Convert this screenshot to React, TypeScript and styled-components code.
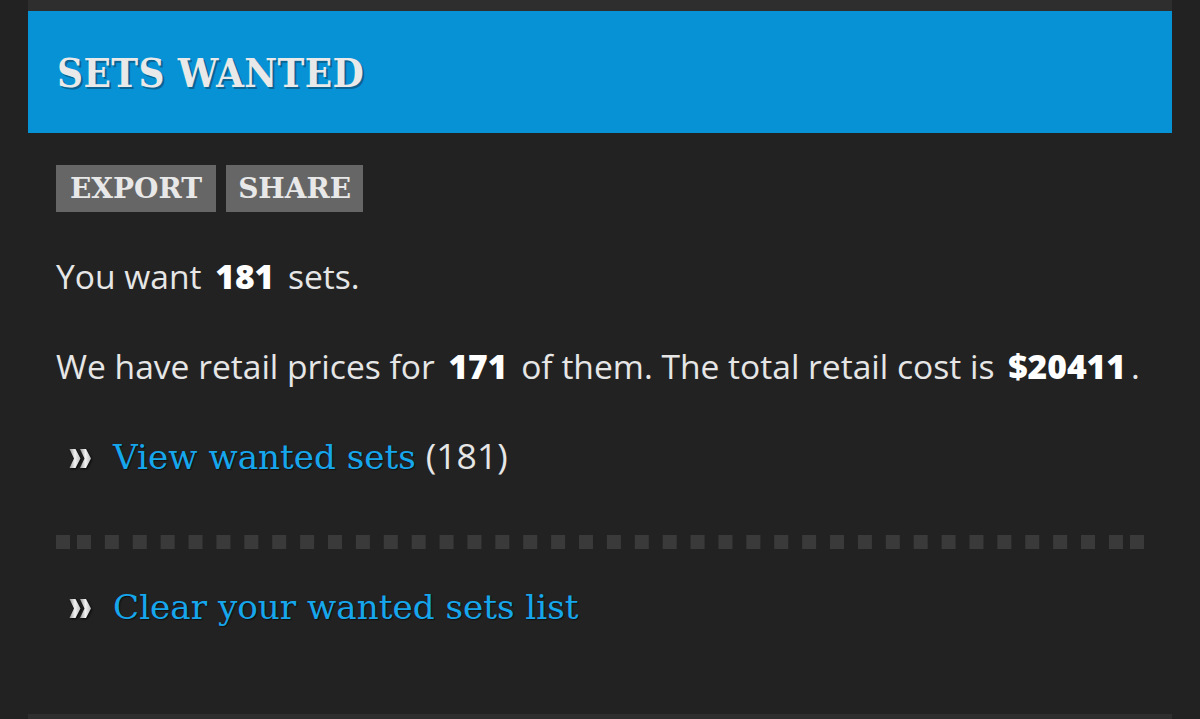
import React from "react";
import styled, { createGlobalStyle } from "styled-components";

const Global = createGlobalStyle`
  html, body { margin: 0; padding: 0; background: #222222; }
  body { font-family: "Open Sans", "Liberation Sans", sans-serif; }
`;

const Page = styled.div`
  width: 1200px;
  height: 719px;
  overflow: hidden;
  padding: 0 28px;
  box-sizing: border-box;
  display: flex;
  flex-direction: column;
`;

const Strip = styled.div<{ $h: number }>`
  height: ${(p) => p.$h}px;
  background: #2e2e2e;
  flex-shrink: 0;
`;

const Panel = styled.section`
  background: #222222;
  flex: 1;
  display: flex;
  flex-direction: column;
`;

const Header = styled.header`
  background: #0792d6;
  height: 122px;
  display: flex;
  align-items: center;
  padding: 0 29px;
`;

const Title = styled.h1`
  margin: 0;
  font-family: "DejaVu Serif Condensed", "DejaVu Serif", serif;
  font-stretch: condensed;
  font-weight: bold;
  font-size: 40px;
  color: #e9e9e9;
  letter-spacing: 0.4px;
  text-shadow: 2px 2px 0 #0a6494;
`;

const Body = styled.div`
  padding: 32px 28px 0;
  display: flex;
  flex-direction: column;
`;

const ButtonRow = styled.div`
  display: flex;
  gap: 10px;
`;

const Button = styled.button<{ $pad: number }>`
  background: #666666;
  border: none;
  height: 47px;
  padding: 0 ${(p) => p.$pad}px;
  font-family: "DejaVu Serif", "Liberation Serif", serif;
  font-weight: bold;
  font-size: 28px;
  color: #e8e8e8;
  cursor: pointer;
`;

const Para = styled.p<{ $top: number }>`
  margin: ${(p) => p.$top}px 0 0;
  font-size: 33.6px;
  line-height: 44px;
  color: #e6e6e6;
`;

const Num = styled.strong`
  font-weight: 800;
  color: #ffffff;
  padding: 0 5px;
`;

const LinkRow = styled.div<{ $top: number }>`
  margin-top: ${(p) => p.$top}px;
  display: flex;
  align-items: baseline;
  padding-left: 13px;
`;

const ChevronBox = styled.span`
  width: 44px;
  flex-shrink: 0;
  svg {
    display: block;
    filter: drop-shadow(1px 1px 1px rgba(0, 0, 0, 0.8));
  }
`;

const LinkText = styled.a`
  font-family: "DejaVu Serif", "Liberation Serif", serif;
  font-size: 34.2px;
  color: #16a6ec;
  text-decoration: none;
  text-shadow: 1px 1px 1px #111;
`;

const Count = styled.span`
  font-size: 35.5px;
  color: #e6e6e6;
  margin-left: 10px;
`;

const DotsWrap = styled.div`
  margin-top: 56px;
  width: 1088px;
  overflow: hidden;
`;

const Dots = styled.div`
  height: 14px;
  width: 1088px;
  background-image: linear-gradient(#3a3a3a, #3a3a3a),
    linear-gradient(#3a3a3a, #3a3a3a),
    linear-gradient(to right, #3a3a3a 0 14px, transparent 14px 28px);
  background-size: 14px 14px, 14px 14px, 27.9px 14px;
  background-position: 0 0, right 0 top 0, 21px 0;
  background-repeat: no-repeat, no-repeat, repeat-x;
`;

function Chevron() {
  return (
    <ChevronBox>
      <svg width="24" height="21" viewBox="0 0 24 21">
        <defs>
          <linearGradient id="chev" x1="0" y1="0" x2="1" y2="0">
            <stop offset="0" stopColor="#9a9a9a" />
            <stop offset="0.5" stopColor="#f2f2f2" />
            <stop offset="1" stopColor="#bdbdbd" />
          </linearGradient>
        </defs>
        <polygon points="0.5,1 6.5,1 11.5,10.5 6.5,20 0.5,20 5,10.5" fill="url(#chev)" />
        <polygon points="11,1 17,1 22,10.5 17,20 11,20 15.5,10.5" fill="url(#chev)" />
      </svg>
    </ChevronBox>
  );
}

export default function App() {
  return (
    <>
      <Global />
      <Page>
        <Strip $h={11} />
        <Panel>
          <Header>
            <Title>SETS WANTED</Title>
          </Header>
          <Body>
            <ButtonRow>
              <Button $pad={14}>EXPORT</Button>
              <Button $pad={12}>SHARE</Button>
            </ButtonRow>
            <Para $top={42}>
              You want <Num>181</Num> sets.
            </Para>
            <Para $top={46}>
              We have retail prices for <Num>171</Num> of them. The total retail cost is <Num>$20411</Num>.
            </Para>
            <LinkRow $top={43}>
              <Chevron />
              <LinkText href="#">View wanted sets</LinkText>
              <Count>(181)</Count>
            </LinkRow>
            <DotsWrap>
              <Dots />
            </DotsWrap>
            <LinkRow $top={38}>
              <Chevron />
              <LinkText href="#">Clear your wanted sets list</LinkText>
            </LinkRow>
          </Body>
        </Panel>
        <Strip $h={5} />
      </Page>
    </>
  );
}
